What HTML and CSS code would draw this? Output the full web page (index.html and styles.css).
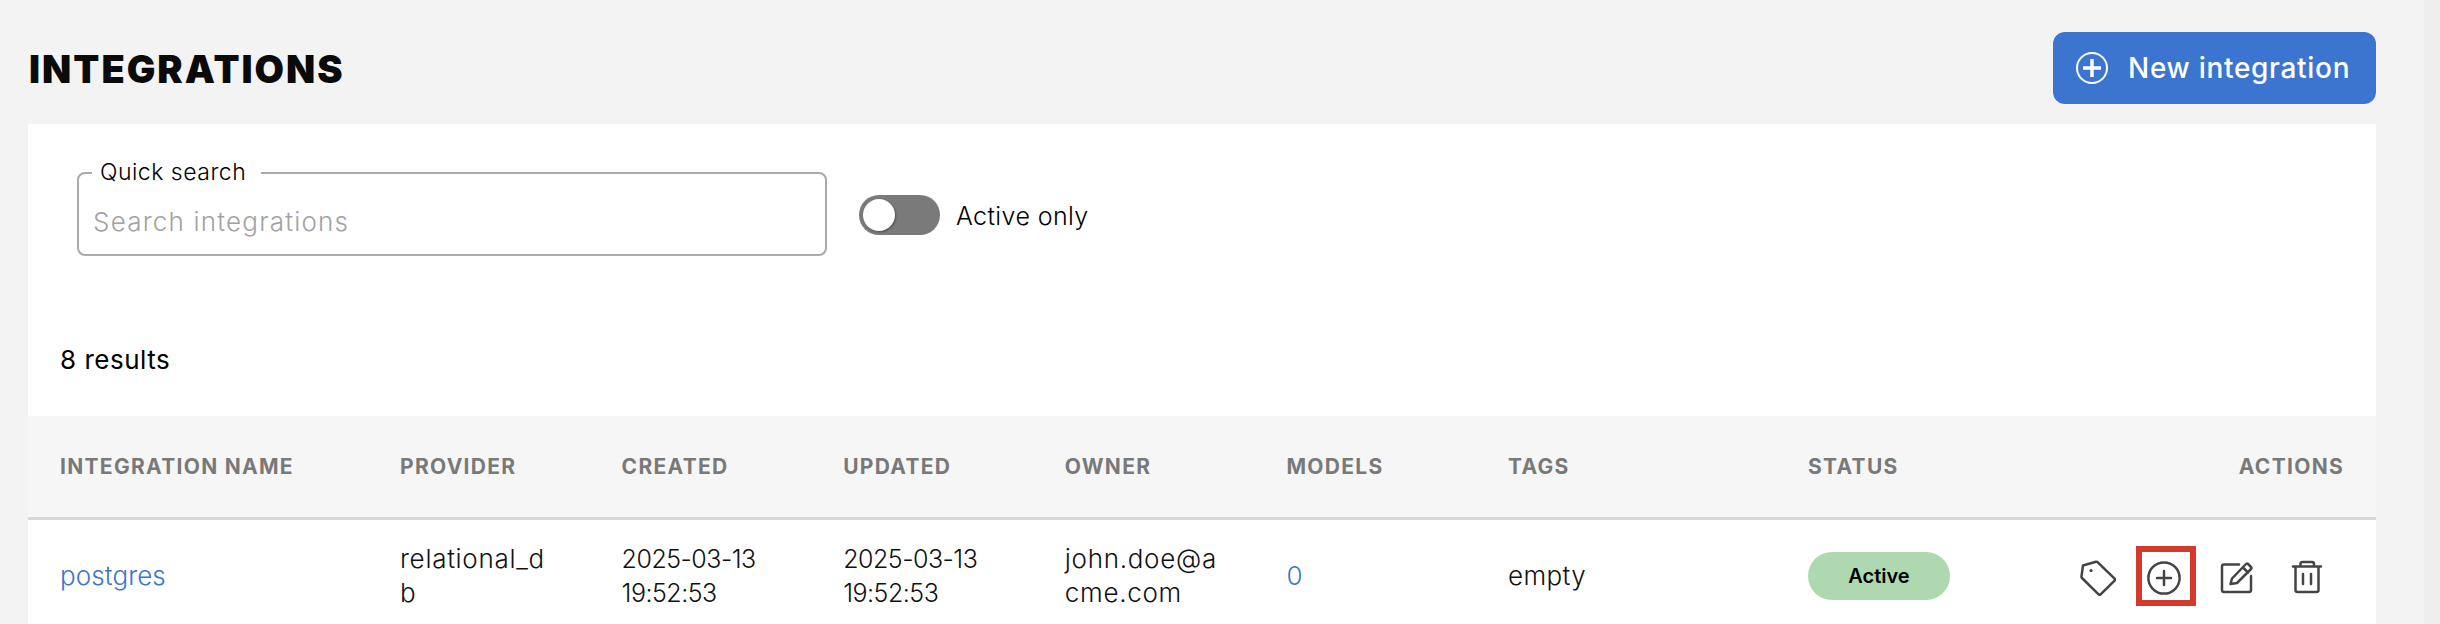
FILE: index.html
```html
<!DOCTYPE html>
<html lang="en">
<head>
<meta charset="utf-8">
<title>Integrations</title>
<link rel="stylesheet" href="styles.css">
</head>
<body>
<div class="page">
  <main class="main">
    <header class="topbar">
      <h1 class="title">INTEGRATIONS</h1>
      <button class="primary" type="button">
        <svg class="primary-icon" viewBox="0 0 32 32" fill="none" stroke="#fff"><circle cx="16" cy="16" r="15" stroke-width="2"/><path d="M16 7v18M7 16h18" stroke-width="3.4"/></svg>
        <span>New integration</span>
      </button>
    </header>
    <section class="panel">
      <div class="filters">
        <div class="field">
          <label class="field-label" for="q">Quick search</label>
          <input class="field-input" id="q" type="text" placeholder="Search integrations">
        </div>
        <div class="toggle-row">
          <span class="toggle"><span class="knob"></span></span>
          <span class="toggle-label">Active only</span>
        </div>
      </div>
      <p class="count">8 results</p>
      <table class="table">
        <colgroup>
          <col class="c-name"><col class="c-std"><col class="c-std"><col class="c-std"><col class="c-std"><col class="c-std"><col class="c-tags"><col class="c-status"><col class="c-actions">
        </colgroup>
        <thead>
          <tr>
            <th>INTEGRATION NAME</th><th>PROVIDER</th><th>CREATED</th><th>UPDATED</th><th>OWNER</th><th>MODELS</th><th>TAGS</th><th>STATUS</th><th class="right">ACTIONS</th>
          </tr>
        </thead>
        <tbody>
          <tr>
            <td class="spaced"><a class="link" href="#">postgres</a></td>
            <td class="wrap">relational_db</td>
            <td class="date">2025-03-13 19:52:53</td>
            <td class="date">2025-03-13 19:52:53</td>
            <td class="wrap">john.doe@acme.com</td>
            <td><a class="link" href="#">0</a></td>
            <td class="spaced-wide">empty</td>
            <td><span class="pill">Active</span></td>
            <td>
              <div class="actions">
                <span class="act act-tag">
                  <svg class="ico" viewBox="0 0 36 36"><path d="M3 5.5 16 1.8Q17 1.5 17.8 2.3L34.6 18.6Q35.6 19.6 34.6 20.6L20.6 34.4Q19.6 35.4 18.6 34.4L2 18Q1.2 17.2 1.5 16.2Z"/><circle class="dot" cx="11" cy="10.5" r="1.6"/></svg>
                </span>
                <span class="act act-marked">
                  <svg class="ico" viewBox="0 0 36 36"><circle cx="18" cy="18" r="15.6"/><path d="M18 11v14M11 18h14"/></svg>
                </span>
                <span class="act">
                  <svg class="ico" viewBox="0 0 36 36"><path d="M21 4.5H6A2 2 0 0 0 4 6.5V30A2 2 0 0 0 6 32H31A2 2 0 0 0 33 30V16"/><path d="M12.5 24 14 18.5 28 4Q29 3 30 4L33 7Q34 8 33 9L19 23ZM25 7.5 30 12.5"/></svg>
                </span>
                <span class="act act-trash">
                  <svg class="ico" viewBox="0 0 36 36"><path d="M4 6.5H32M11.5 6V4Q11.5 2 13.5 2H23Q25 2 25 4V6M6.5 6.5V30A2 2 0 0 0 8.5 32H27.5A2 2 0 0 0 29.5 30V6.5M14 14V24M22 14V24"/></svg>
                </span>
              </div>
            </td>
          </tr>
        </tbody>
      </table>
    </section>
  </main>
  <div class="scrollbar"></div>
</div>
</body>
</html>
```

FILE: styles.css
```css
* { box-sizing: border-box; }
html, body { margin: 0; height: 100%; }
body { background: #f3f3f3; overflow: hidden; font-family: "Inter", "Noto Sans", sans-serif; font-weight: 300; color: #000; }
.page { display: flex; height: 624px; overflow: hidden; }
.main { flex: 1; min-width: 0; padding: 32px 48px 0 28px; }
.scrollbar { width: 16px; background: #eeeeee; }

.topbar { display: flex; justify-content: space-between; align-items: center; height: 72px; margin-bottom: 20px; }
.title { margin: 0 0 -2px 1px; font-weight: 900; font-size: 38px; line-height: 1; letter-spacing: 2px; color: #0a0a0a; }
.primary { display: flex; align-items: center; gap: 20px; width: 323px; height: 72px; padding: 0 0 0 23px; border: 0; border-radius: 12px; background: #3b75cf; color: #fff; font-family: inherit; font-size: 28px; font-weight: 500; letter-spacing: 0.7px; }
.primary-icon { width: 32px; height: 32px; flex: none; }

.panel { background: #fff; height: 500px; padding-top: 48px; }
.filters { display: flex; align-items: center; gap: 32px; padding-left: 49px; }
.field { position: relative; width: 750px; height: 84px; }
.field-label { position: absolute; left: 15px; top: -14px; padding: 0 15px 0 8px; background: #fff; font-size: 23px; line-height: 28px; letter-spacing: 0.5px; color: #000; }
.field-input { width: 100%; height: 100%; padding: 14px 14px 0; border: 2px solid #aaaaaa; border-radius: 8px; background: #fff; font: inherit; font-size: 26px; letter-spacing: 1.2px; outline: 0; }
.field-input::placeholder { color: #a2a2a2; opacity: 1; }

.toggle-row { display: flex; align-items: center; gap: 16px; margin-top: 2px; }
.toggle { display: flex; align-items: center; width: 81px; height: 40px; padding-left: 4px; border-radius: 20px; background: #7a7a7a; }
.knob { width: 32px; height: 32px; border-radius: 50%; background: #fff; box-shadow: 1px 1px 2px rgba(0,0,0,.35); }
.toggle-label { padding-top: 2px; font-size: 25px; letter-spacing: 0.4px; color: #000; }

.count { margin: 0; padding: 87px 0 0 32px; height: 160px; font-size: 26px; line-height: 34px; letter-spacing: 0.5px; color: #000; font-weight: 400; }

.table { width: 2348px; border-collapse: separate; border-spacing: 0; table-layout: fixed; }
.c-name { width: 340px; }
.c-std { width: 221.6px; }
.c-tags { width: 300px; }
.c-status { width: 200px; }
.c-actions { width: 400px; }
th { height: 104px; padding: 0 32px; border-bottom: 3px solid #d8d8d8; background: #f6f6f6; text-align: left; font-size: 21px; font-weight: 700; letter-spacing: 1.3px; color: #797979; }
th.right { text-align: right; }
td { height: 112px; padding: 0 32px; font-size: 26px; line-height: 34px; color: #111; }
td.wrap { word-break: break-all; letter-spacing: 0.7px; }
td.date { font-size: 25px; letter-spacing: -0.5px; }
td.spaced { letter-spacing: 0.1px; }
td.spaced-wide { letter-spacing: 0.4px; }
.link { color: #3b75cf; text-decoration: none; }
.pill { display: inline-flex; align-items: center; justify-content: center; width: 142px; height: 48px; border-radius: 24px; background: #aed9b0; font-size: 20px; font-weight: 600; color: #000; }

.actions { display: flex; justify-content: flex-end; align-items: center; gap: 10px; margin-right: 7px; }
.act { display: flex; align-items: center; justify-content: center; width: 60px; height: 60px; }
.act-tag { margin-right: -2px; }
.act-trash { margin-left: 1px; }
.act-marked { border: 6px solid #d43a2c; padding: 4px 4px 0 0; }
.ico { width: 36px; height: 36px; flex: none; margin-top: 4px; fill: none; stroke: #444; stroke-width: 2.5; stroke-linejoin: round; stroke-linecap: round; }
.act-marked .ico { margin-top: 0; }
.dot { fill: #444; stroke: none; }
```
